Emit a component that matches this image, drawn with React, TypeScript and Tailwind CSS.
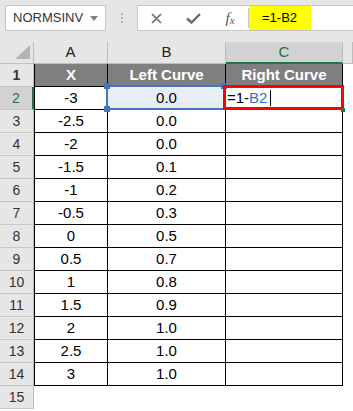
const rows: [string, string][] = [
  ["-3", "0.0"],
  ["-2.5", "0.0"],
  ["-2", "0.0"],
  ["-1.5", "0.1"],
  ["-1", "0.2"],
  ["-0.5", "0.3"],
  ["0", "0.5"],
  ["0.5", "0.7"],
  ["1", "0.8"],
  ["1.5", "0.9"],
  ["2", "1.0"],
  ["2.5", "1.0"],
  ["3", "1.0"],
];

function RowHeader({ n, active }: { n: number; active?: boolean }) {
  return (
    <div
      className={
        active
          ? "flex w-[34px] shrink-0 items-center justify-center border-b border-r-2 border-b-[#c8c8c8] border-r-[#217346] bg-[#d2d2d2] text-[14px] text-[#217346]"
          : "flex w-[34px] shrink-0 items-center justify-center border-b border-r border-b-[#c8c8c8] border-r-[#bdbdbd] bg-[#e6e6e6] text-[14px] text-[#333]"
      }
    >
      {n}
    </div>
  );
}

export default function App() {
  return (
    <div className="h-[411px] w-[353px] overflow-hidden bg-white font-['Liberation_Sans',Arial,sans-serif] text-black">
      {/* formula bar */}
      <div className="flex h-[42px] bg-[#e6e6e6] pt-[5px]">
        <div className="ml-[5px] flex h-[26px] w-[101px] items-center border border-[#c6c6c6] bg-white pl-[7px] text-[13px] text-[#333]">
          NORMSINV
          <svg className="ml-auto mr-[7px]" width="8" height="5" viewBox="0 0 8 5">
            <path d="M0 0 L8 0 L4 5 Z" fill="#808080" />
          </svg>
        </div>
        <div className="flex h-[26px] w-[31px] flex-col items-center justify-center gap-[2px]">
          <div className="h-[2px] w-[2px] bg-[#b0b0b0]" />
          <div className="h-[2px] w-[2px] bg-[#b0b0b0]" />
          <div className="h-[2px] w-[2px] bg-[#b0b0b0]" />
        </div>
        <div className="flex h-[26px] flex-1 items-stretch border border-r-0 border-[#c6c6c6] bg-white">
          <div className="flex w-[36px] items-center justify-center">
            <svg width="11" height="11" viewBox="0 0 11 11">
              <path d="M1 1 L10 10 M10 1 L1 10" stroke="#6a6a6a" strokeWidth="1.6" />
            </svg>
          </div>
          <div className="flex w-[38px] items-center justify-center">
            <svg width="15" height="11" viewBox="0 0 15 11">
              <path d="M1 5.5 L5.5 9.5 L14 1" stroke="#6a6a6a" strokeWidth="2.4" fill="none" />
            </svg>
          </div>
          <div className="flex w-[36px] items-center justify-center font-['Liberation_Serif',serif] text-[15px] italic text-[#555]">
            f<span className="mt-[4px] text-[11px]">x</span>
          </div>
          <div className="my-[2px] w-px bg-[#c6c6c6]" />
          <div className="flex w-[62px] items-center bg-[#ffff00] pl-[13px] text-[13px]">=1-B2</div>
        </div>
      </div>

      {/* column headers */}
      <div className="flex h-[22px] text-[15px]">
        <div className="flex w-[34px] shrink-0 items-end justify-end border-b border-r border-[#bdbdbd] bg-[#e6e6e6] pb-[4px] pr-[3px]">
          <svg width="15" height="14" viewBox="0 0 15 14">
            <path d="M15 0 L15 14 L0 14 Z" fill="#b4b4b4" />
          </svg>
        </div>
        <div className="flex w-[74px] shrink-0 items-center justify-center border-b border-r border-[#bdbdbd] bg-[#e6e6e6] text-[#222]">A</div>
        <div className="flex w-[118px] shrink-0 items-center justify-center border-b border-r border-[#bdbdbd] bg-[#e6e6e6] text-[#222]">B</div>
        <div className="flex w-[117px] shrink-0 items-center justify-center border-b-2 border-r border-b-[#217346] border-r-[#bdbdbd] bg-[#d2d2d2] text-[#217346]">C</div>
        <div className="flex-1 border-b border-r border-[#bdbdbd] bg-[#e6e6e6]" />
      </div>

      {/* row 1 */}
      <div className="flex h-[23px] text-[15px] font-bold text-white">
        <RowHeader n={1} />
        <div className="flex w-[74px] shrink-0 items-center justify-center border-x border-b border-black bg-[#7f7f7f]">X</div>
        <div className="flex w-[118px] shrink-0 items-center justify-center border-b border-r border-black bg-[#7f7f7f]">Left Curve</div>
        <div className="flex w-[117px] shrink-0 items-center justify-center border-b border-r border-black bg-[#7f7f7f]">Right Curve</div>
      </div>

      {rows.map(([x, left], i) => {
        const n = i + 2;
        const active = n === 2;
        return (
          <div key={n} className="flex h-[23px] text-[15px]">
            <RowHeader n={n} active={active} />
            <div className="flex w-[74px] shrink-0 items-center justify-center border-x border-b border-black">{x}</div>
            <div
              className={
                active
                  ? "relative flex w-[118px] shrink-0 items-center justify-center border-b border-r border-black bg-[#e8eef8]"
                  : "flex w-[118px] shrink-0 items-center justify-center border-b border-r border-black"
              }
            >
              {left}
              {active && (
                <div className="absolute -bottom-px -left-[2px] right-0 -top-[2px] border-2 border-[#4472c4]">
                  <div className="absolute -left-[4px] -top-[4px] h-[6px] w-[6px] bg-[#4472c4]" />
                  <div className="absolute -bottom-[4px] -left-[4px] h-[6px] w-[6px] bg-[#4472c4]" />
                  <div className="absolute -right-[4px] -top-[4px] h-[6px] w-[6px] bg-[#4472c4]" />
                </div>
              )}
            </div>
            <div
              className={
                active
                  ? "relative flex w-[117px] shrink-0 items-center border-b border-r border-black pl-px"
                  : "w-[117px] shrink-0 border-b border-r border-black"
              }
            >
              {active && (
                <>
                  <span>=1-</span>
                  <span className="text-[#3a6fc4]">B2</span>
                  <span className="ml-[3px] h-[16px] w-px bg-black" />
                  <div className="absolute -bottom-px -left-[3px] -right-[2px] -top-[2px] border-[3px] border-[#ff0000]" />
                  <div className="absolute -bottom-[3px] -right-[3px] h-[4px] w-[4px] bg-[#217346]" />
                </>
              )}
            </div>
          </div>
        );
      })}

      {/* row 15 */}
      <div className="flex h-[23px] text-[15px]">
        <RowHeader n={15} />
      </div>
    </div>
  );
}
